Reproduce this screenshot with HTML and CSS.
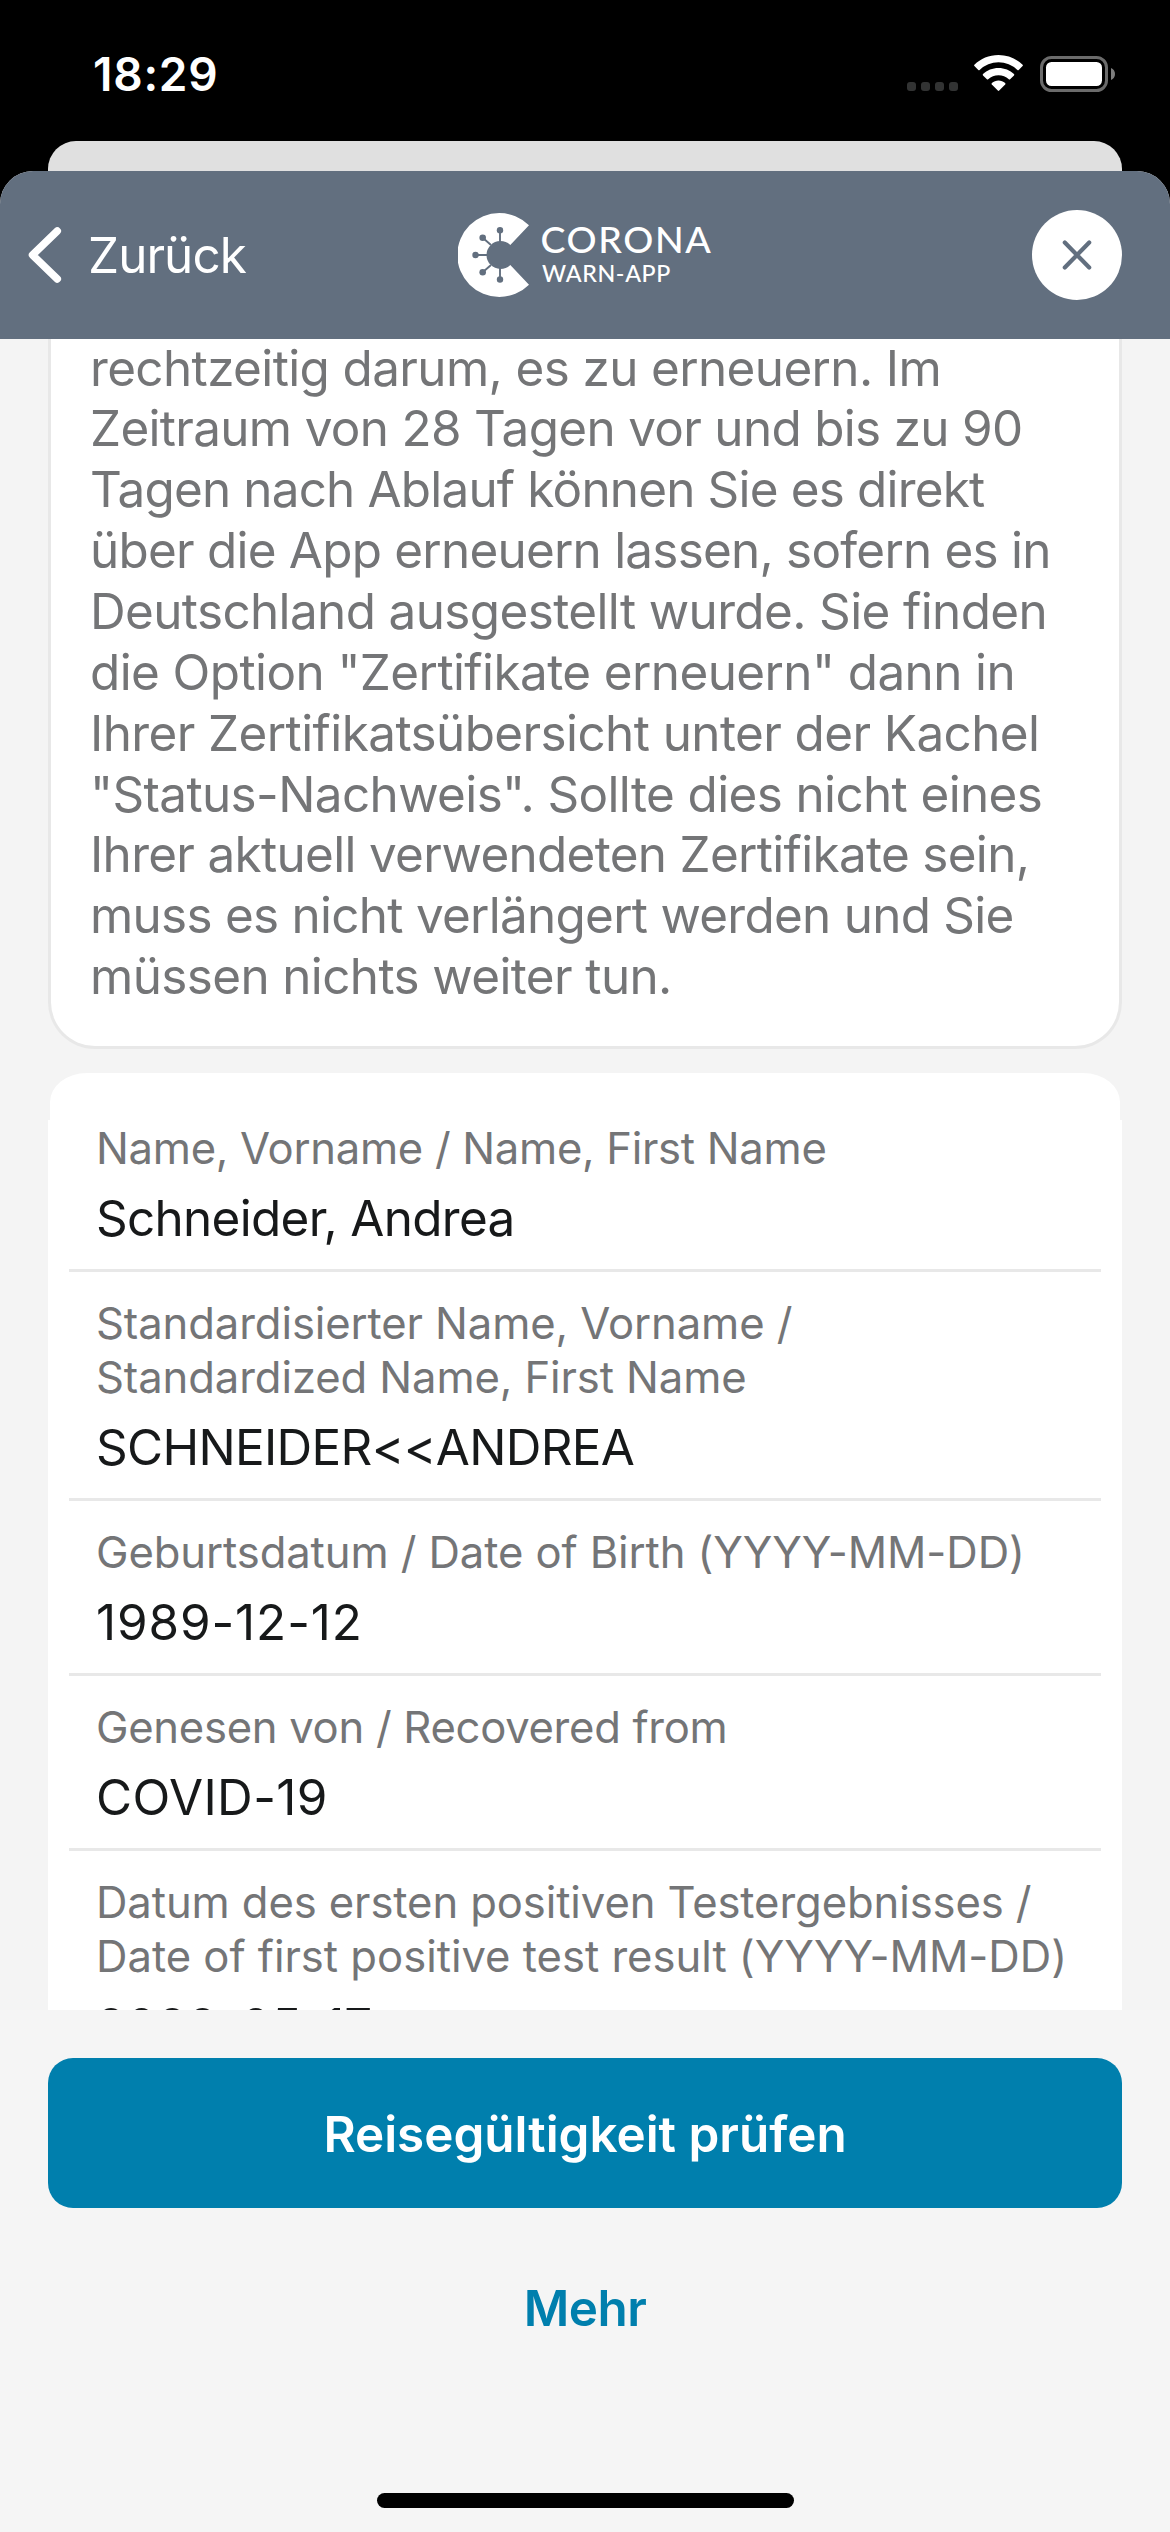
FILE: index.html
```html
<!DOCTYPE html>
<html lang="de">
<head>
<meta charset="utf-8">
<title>Corona-Warn-App</title>
<link rel="stylesheet" href="styles.css">
</head>
<body>
<div class="screen">
  <div class="status-bar">
    <span class="time">18:29</span>
    <div class="status-icons">
      <div class="signal"><i></i><i></i><i></i><i></i></div>
      <svg class="wifi" width="49" height="37" viewBox="0 0 49 37" fill="#fff">
        <path d="M24.5 0C34 0 42.400 3.700 48.600 9.700Q49.200 10.400 48.600 11L44.700 15Q44 15.500 43.400 15A27.200 27.200 0 0 0 5.600 15Q5 15.500 4.300 15L.400 11Q-.200 10.400 .400 9.700C6.600 3.700 15 0 24.500 0Z"/>
        <path d="M24.500 13C30.500 13 35.900 15.300 40 19.100Q40.600 19.800 40 20.400L36.100 24.300Q35.500 24.900 34.800 24.300A15.200 15.200 0 0 0 14.200 24.300Q13.500 24.900 12.900 24.300L9 20.400Q8.400 19.800 9 19.100C13.100 15.300 18.500 13 24.500 13Z"/>
        <path d="M24.500 25.500C27 25.500 29.300 26.400 31.100 28Q31.800 28.700 31.200 29.400L25.200 35.600Q24.500 36.300 23.800 35.600L17.800 29.400Q17.200 28.700 17.900 28C19.700 26.400 22 25.500 24.500 25.500Z"/>
      </svg>
      <svg class="battery" width="76" height="36" viewBox="0 0 76 36">
        <rect x="1.500" y="1.500" width="65" height="33" rx="10" fill="none" stroke="#6b6b6b" stroke-width="3"/>
        <rect x="6" y="6" width="56" height="24" rx="5.500" fill="#fff"/>
        <path d="M71 12C73.500 13 75 15.300 75 18S73.500 23 71 24Z" fill="#7d7d7d"/>
      </svg>
    </div>
  </div>
  <div class="back-sheet"></div>
  <div class="sheet">
    <header class="nav">
      <div class="back">
        <svg width="36" height="60" viewBox="0 0 36 60" fill="none" stroke="#fff" stroke-width="7.500" stroke-linecap="round" stroke-linejoin="round"><path d="M29.300 6L4.500 30L29.300 54"/></svg>
        <span>Zurück</span>
      </div>
      <svg class="logo" width="254" height="84" viewBox="0 0 254 84">
        <path d="M71 12.300A42 42 0 1 0 71 71.700L52.300 52A14 14 0 1 1 52.300 32Z" fill="#fff"/>
        <g stroke="#626f7f" stroke-width="1.900">
          <path d="M42 30V17M33 32L24.700 24.700M30 42H17.500M33 52L24.700 59.300M42 54V67"/>
        </g>
        <g fill="#626f7f">
          <circle cx="42" cy="17.300" r="3.200"/><circle cx="24.700" cy="24.700" r="3.300"/><circle cx="17.500" cy="42" r="3.200"/><circle cx="24.700" cy="59.300" r="3.300"/><circle cx="42" cy="66.500" r="3.200"/>
        </g>
        <text class="logo-main" x="82.500" y="40">CORONA</text>
        <text class="logo-sub" x="84" y="68.700">WARN-APP</text>
      </svg>
      <div class="close">
        <svg width="90" height="90" viewBox="0 0 90 90" fill="none" stroke="#626f7f" stroke-width="4.200" stroke-linecap="round"><path d="M32.800 32.500L57.200 57.500M57.200 32.500L32.800 57.500"/></svg>
      </div>
    </header>
    <main class="content">
      <section class="notice">
        <p class="notice-text">
          <span>rechtzeitig darum, es zu erneuern. Im</span>
          <span>Zeitraum von 28 Tagen vor und bis zu 90</span>
          <span>Tagen nach Ablauf können Sie es direkt</span>
          <span>über die App erneuern lassen, sofern es in</span>
          <span>Deutschland ausgestellt wurde. Sie finden</span>
          <span>die Option "Zertifikate erneuern" dann in</span>
          <span>Ihrer Zertifikatsübersicht unter der Kachel</span>
          <span>"Status-Nachweis". Sollte dies nicht eines</span>
          <span>Ihrer aktuell verwendeten Zertifikate sein,</span>
          <span>muss es nicht verlängert werden und Sie</span>
          <span>müssen nichts weiter tun.</span>
        </p>
      </section>
      <section class="details">
        <div class="details-cap"></div>
        <dl class="row first">
          <dt><span class="loose">Name, Vorname / Name, First Name</span></dt>
          <dd>Schneider, Andrea</dd>
        </dl>
        <dl class="row">
          <dt><span>Standardisierter Name, Vorname /</span><span>Standardized Name, First Name</span></dt>
          <dd>SCHNEIDER&lt;&lt;ANDREA</dd>
        </dl>
        <dl class="row">
          <dt><span>Geburtsdatum / Date of Birth (YYYY-MM-DD)</span></dt>
          <dd class="date">1989-12-12</dd>
        </dl>
        <dl class="row">
          <dt><span class="loose">Genesen von / Recovered from</span></dt>
          <dd class="code">COVID-19</dd>
        </dl>
        <dl class="row">
          <dt><span>Datum des ersten positiven Testergebnisses /</span><span class="wide">Date of first positive test result (YYYY-MM-DD)</span></dt>
          <dd class="test-date">2022-05-17</dd>
        </dl>
      </section>
    </main>
    <footer class="actions">
      <div class="primary">Reisegültigkeit prüfen</div>
      <div class="secondary">Mehr</div>
      <div class="home"></div>
    </footer>
  </div>
</div>
</body>
</html>
```
FILE: styles.css
```css
* { box-sizing: border-box; margin: 0; padding: 0; }
body { background: #000; font-family: "Inter", "Liberation Sans", sans-serif; }
.screen { width: 1170px; height: 2532px; overflow: hidden; display: flex; flex-direction: column; background: #000; }

.status-bar { height: 141px; flex: none; display: flex; justify-content: space-between; padding: 46px 54px 0 93px; }
.time { color: #fff; font-size: 46px; font-weight: 600; line-height: 56px; letter-spacing: .75px; }
.status-icons { display: flex; align-items: flex-end; height: 46px; }
.signal { display: flex; gap: 5px; padding-bottom: 1px; margin-right: 16px; }
.signal i { width: 9px; height: 9px; border-radius: 3px; background: #323333; }
.wifi { margin-right: 17px; }

.back-sheet { height: 30px; flex: none; margin: 0 48px; background: #e0e0e0; border-radius: 28px 28px 0 0; }
.sheet { flex: 1; min-height: 0; display: flex; flex-direction: column; background: #f4f4f4; border-radius: 33px 33px 0 0; overflow: hidden; }

.nav { height: 168px; flex: none; display: grid; grid-template-columns: 1fr auto 1fr; align-items: center; padding: 0 48px 0 28px; background: #626f7f; }
.back { display: flex; align-items: center; gap: 24px; color: #fff; font-size: 49.4px; line-height: 60px; letter-spacing: -.92px; }
.logo { display: block; margin-left: 20px; }
.logo text { fill: #fff; font-family: "Lato", sans-serif; }
.logo-main { font-size: 37.5px; font-weight: 500; letter-spacing: 1.6px; }
.logo-sub { font-size: 23.2px; font-weight: 500; letter-spacing: .65px; }
.close { justify-self: end; width: 90px; height: 90px; border-radius: 50%; background: #fff; }
.close svg { display: block; }

.content { height: 1671px; flex: none; overflow: hidden; padding: 0 48px; }
.notice { height: 710px; overflow: hidden; background: #fff; border: 3px solid #e8e8e8; border-top: 0; border-radius: 0 0 47px 47px; padding: 0 39px; }
.notice-text { margin-top: -1.5px; color: #747577; font-size: 49.4px; line-height: 60.86px; white-space: nowrap; }
.notice-text span { display: block; letter-spacing: -.6px; }
.notice-text span:nth-child(2), .notice-text span:nth-child(9) { letter-spacing: -.67px; }
.notice-text span:nth-child(3) { letter-spacing: -.8px; }
.notice-text span:nth-child(4) { letter-spacing: -.75px; }
.notice-text span:nth-child(6), .notice-text span:nth-child(7) { letter-spacing: -.57px; }
.notice-text span:nth-child(10) { letter-spacing: -.71px; }

.details { margin-top: 24px; background: linear-gradient(#fff, #fff) 0 47px no-repeat; }
.details-cap { height: 47px; margin: 0 2px; background: #fff; border-radius: 37px 37px 0 0 / 29px 29px 0 0; }
.row { margin: 0 21px; padding: 25px 27px 20.5px; border-bottom: 3px solid #e8e8e8; white-space: nowrap; }
.row.first { padding-top: 1.8px; }
.row dt { color: #747577; font-size: 43.6px; line-height: 53.8px; letter-spacing: -.1px; margin-bottom: 12px; }
.row dt span { display: block; }
.row dt .loose { letter-spacing: -.29px; }
.row dt .wide { letter-spacing: -.02px; }
.row dd { color: #17191a; font-size: 49.4px; line-height: 60.9px; letter-spacing: -.67px; }
.row dd.date { letter-spacing: .9px; }
.row dd.code { letter-spacing: .4px; }
.row dd.test-date { letter-spacing: 0; }

.actions { flex: 1; display: flex; flex-direction: column; align-items: stretch; padding: 48px 48px 24px; background: #f5f5f5; text-align: center; font-size: 49.4px; font-weight: 600; }
.primary { height: 150px; line-height: 152px; border-radius: 25px; background: #007fad; color: #fff; }
.secondary { height: 150px; line-height: 150px; margin-top: 25px; color: #007fad; letter-spacing: -.5px; }
.home { width: 417px; height: 15px; margin: auto auto 0; border-radius: 8px; background: #000; }
```
